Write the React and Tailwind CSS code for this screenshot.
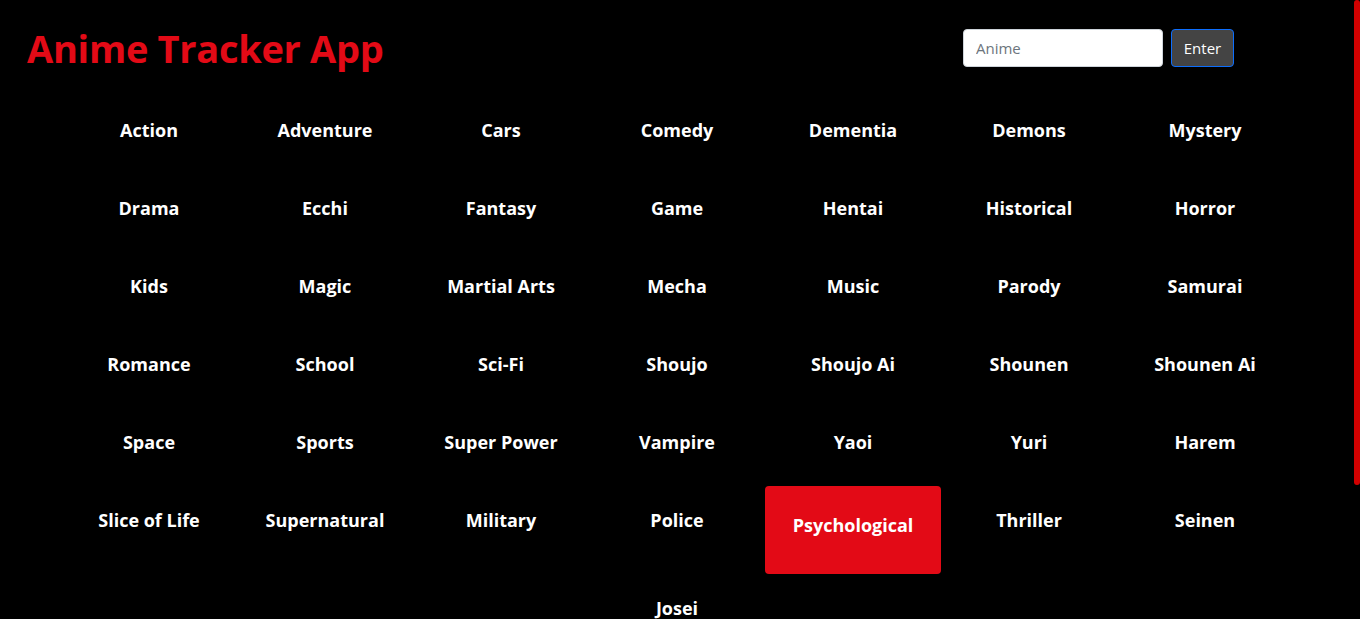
import React from 'react';

const genres = [
    'Action', 'Adventure', 'Cars', 'Comedy', 'Dementia', 'Demons', 'Mystery',
    'Drama', 'Ecchi', 'Fantasy', 'Game', 'Hentai', 'Historical', 'Horror',
    'Kids', 'Magic', 'Martial Arts', 'Mecha', 'Music', 'Parody', 'Samurai',
    'Romance', 'School', 'Sci-Fi', 'Shoujo', 'Shoujo Ai', 'Shounen', 'Shounen Ai',
    'Space', 'Sports', 'Super Power', 'Vampire', 'Yaoi', 'Yuri', 'Harem',
    'Slice of Life', 'Supernatural', 'Military', 'Police', 'Psychological', 'Thriller', 'Seinen',
    'Josei'
];

const active = 'Psychological';

const App = () => {
    return (
        <div className="h-screen flex overflow-hidden bg-black text-white [font-family:'Open_Sans',sans-serif]">
            <div className="flex-1 min-w-0">
                {/* Header */}
                <div className="flex items-start pt-[29px]">
                    <h1 className="ml-[27px] mt-[-5px] text-[38px] leading-[48px] font-bold text-[#e30a16] tracking-[-0.3px]">
                        Anime Tracker App
                    </h1>
                    <form className="ml-auto mr-[120px] flex gap-2" onSubmit={(e) => e.preventDefault()}>
                        <input
                            type="text"
                            placeholder="Anime"
                            className="w-[200px] h-[38px] rounded-[4px] border border-[#ced4da] bg-white px-3 text-[15px] text-[#212529] placeholder:text-[#6c757d] outline-none"
                        />
                        <button
                            type="submit"
                            className="w-[63px] h-[38px] rounded-[4px] border border-[#0d6efd] bg-[#444444] text-[15px] text-white"
                        >
                            Enter
                        </button>
                    </form>
                </div>

                {/* Genre grid */}
                <div className="w-[1232px] mx-auto mt-[19px] grid grid-cols-7 items-start">
                    {genres.map((genre) => (
                        genre === active ? (
                            <div
                                key={genre}
                                className="h-[88px] mt-[5px] -mb-[5px] pb-[10px] flex items-center justify-center rounded-[4px] bg-[#e30a16] text-[18px] font-bold cursor-pointer"
                            >
                                {genre}
                            </div>
                        ) : (
                            <div
                                key={genre}
                                className={`h-[78px] flex items-center justify-center text-[18px] font-bold cursor-pointer ${genre === 'Josei' ? 'col-start-4' : ''}`}
                            >
                                {genre}
                            </div>
                        )
                    ))}
                </div>
            </div>

            {/* Scrollbar */}
            <div className="w-[6px] shrink-0">
                <div className="h-[485px] rounded-full bg-[#d10000]" />
            </div>
        </div>
    );
};

export default App;
